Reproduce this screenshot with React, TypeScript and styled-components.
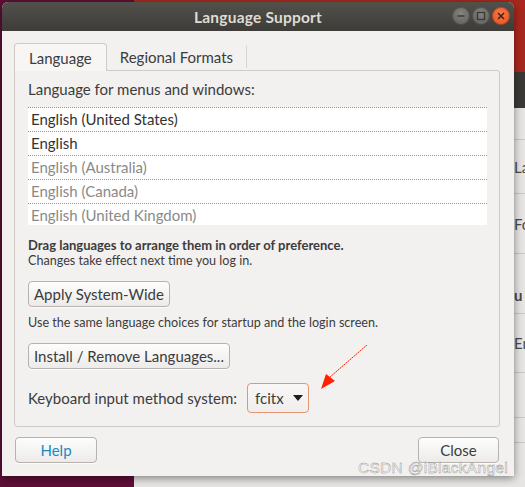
import styled, { createGlobalStyle } from "styled-components";

const GlobalStyle = createGlobalStyle`
  html, body {
    margin: 0;
    padding: 0;
    overflow: hidden;
  }
  body {
    font-family: "Lato", "Liberation Sans", sans-serif;
  }
`;

const Desktop = styled.div`
  position: relative;
  width: 525px;
  height: 487px;
  overflow: hidden;
  background: #5d0f35;
`;

// the window behind the dialog, on the right
const BackWindow = styled.div`
  position: absolute;
  left: 134px;
  top: 0;
  width: 391px;
  height: 487px;
  display: flex;
  flex-direction: column;
  background: #e6e5e3;
`;

const BackTop = styled.div`
  height: 72px;
  background: #a9281d;
`;

const BackHeader = styled.div`
  height: 36px;
  background: #3a3936;
`;

const BackList = styled.div`
  display: flex;
  flex-direction: column;
  padding-left: 240px;
`;

const BackRow = styled.div<{ $h: number; $bold?: boolean }>`
  height: ${({ $h }) => $h}px;
  box-sizing: border-box;
  border-bottom: 1px solid #c9c7c4;
  display: flex;
  align-items: center;
  padding-left: 140px;
  padding-top: ${({ $bold }) => ($bold ? "22px" : "0")};
  font-size: 15px;
  font-weight: ${({ $bold }) => ($bold ? 700 : 400)};
  color: #4a4a4a;
  white-space: nowrap;
`;

const Dialog = styled.div`
  position: absolute;
  left: 2px;
  top: 2px;
  width: 512px;
  height: 474px;
  display: flex;
  flex-direction: column;
  background: #f2f1f0;
  border-radius: 6px 6px 0 0;
  box-shadow: 0 2px 8px rgba(0, 0, 0, 0.45);
`;

const TitleBar = styled.div`
  position: relative;
  height: 29px;
  flex-shrink: 0;
  display: flex;
  align-items: center;
  justify-content: center;
  background: linear-gradient(#52504b, #3d3c38);
  border-radius: 6px 6px 0 0;
`;

const Title = styled.div`
  font-family: "Lato", "Liberation Sans", sans-serif;
  font-weight: 700;
  font-size: 15.5px;
  color: #dfdbd2;
  letter-spacing: 0.2px;
`;

const WindowButtons = styled.div`
  position: absolute;
  right: 4px;
  top: 5px;
  display: flex;
  gap: 2px;
`;

const WinButton = styled.div<{ $close?: boolean }>`
  width: 18px;
  height: 18px;
  border-radius: 50%;
  display: flex;
  align-items: center;
  justify-content: center;
  background: ${({ $close }) =>
    $close
      ? "radial-gradient(circle at 50% 35%, #f7774a, #e1501d)"
      : "radial-gradient(circle at 50% 35%, #85837e, #5c5a55)"};
  box-shadow: inset 0 0 0 1px rgba(0, 0, 0, 0.25);
`;

const Body = styled.div`
  position: relative;
  flex: 1;
  display: flex;
  flex-direction: column;
  padding: 12px 14px 0 12px;
`;

const Tabs = styled.div`
  display: flex;
  align-items: flex-end;
  height: 27px;
`;

const Tab = styled.div<{ $active?: boolean }>`
  box-sizing: border-box;
  display: flex;
  align-items: center;
  padding: 0 14px;
  font-size: 15px;
  color: #3c3c3c;
  ${({ $active }) =>
    $active
      ? `
    background: #f7f6f5;
    border: 1px solid #cfcac5;
    border-bottom: none;
    border-radius: 4px 4px 0 0;
    margin-bottom: -1px;
    position: relative;
    z-index: 1;
    height: 28px;
  `
      : `
    height: 22px;
    border-right: 1px solid #d8d4d0;
    margin-bottom: 2px;
    padding: 0 13px;
  `}
`;

const Panel = styled.div`
  height: 357px;
  box-sizing: border-box;
  border: 1px solid #cfcac5;
  border-radius: 0 3px 3px 3px;
  padding: 0 12px 0 13px;
  display: flex;
  flex-direction: column;
`;

const Heading = styled.div`
  height: 36px;
  display: flex;
  align-items: center;
  font-size: 15px;
  color: #3c3c3c;
`;

const LangList = styled.div`
  height: 118px;
  overflow: hidden;
  background: #ffffff;
  display: flex;
  flex-direction: column;
`;

const LangRow = styled.div<{ $dim?: boolean }>`
  height: 24px;
  flex-shrink: 0;
  box-sizing: border-box;
  border-top: 1px dotted #e4733f;
  display: flex;
  align-items: center;
  padding: 0 0 2px 3px;
  font-size: 15px;
  color: ${({ $dim }) => ($dim ? "#8a8a8a" : "#333333")};
`;

const Note = styled.div<{ $bold?: boolean }>`
  font-size: ${({ $bold }) => ($bold ? "13px" : "12.6px")};
  line-height: 15px;
  color: #3c3c3c;
  font-weight: ${({ $bold }) => ($bold ? 700 : 400)};
`;

const NoteBlock = styled.div`
  display: flex;
  flex-direction: column;
  padding-top: 13px;
`;

const Spacer = styled.div<{ $h: number }>`
  height: ${({ $h }) => $h}px;
  flex-shrink: 0;
`;

const Button = styled.div<{ $w?: number }>`
  box-sizing: border-box;
  height: 26px;
  ${({ $w }) => ($w ? `width: ${$w}px;` : "")}
  padding: 0 5px;
  display: inline-flex;
  align-items: center;
  justify-content: center;
  align-self: flex-start;
  border: 1px solid #b7b2ac;
  border-radius: 4px;
  background: linear-gradient(#fdfdfd, #ecebe9);
  box-shadow: 0 1px 0 rgba(255, 255, 255, 0.8);
  font-size: 15px;
  color: #3c3c3c;
`;

const HelpText = styled.span`
  color: #1a8ac6;
`;

const KeyboardRow = styled.div`
  display: flex;
  align-items: center;
  gap: 10px;
  margin-top: 14px;
`;

const Label = styled.div`
  font-size: 15px;
  color: #3c3c3c;
`;

const Combo = styled.div`
  box-sizing: border-box;
  width: 62px;
  height: 30px;
  display: flex;
  align-items: center;
  gap: 9px;
  padding-left: 7px;
  border: 1px solid #e49572;
  border-radius: 4px;
  background: linear-gradient(#f8f7f6, #efeeec);
  font-size: 15px;
  color: #3c3c3c;
`;

const Footer = styled.div`
  display: flex;
  justify-content: space-between;
  padding: 10px 1px 0 1px;
`;

const Arrow = styled.svg`
  position: absolute;
  left: 304px;
  top: 314px;
  pointer-events: none;
`;

const Watermark = styled.div`
  position: absolute;
  right: 17px;
  top: 459px;
  font-family: "Liberation Sans", sans-serif;
  font-size: 15.5px;
  color: rgba(250, 250, 250, 0.85);
  -webkit-text-stroke: 0.4px #8c8c8c;
  letter-spacing: 0.3px;
`;

const backRows = [
  { h: 32, t: "" },
  { h: 54, t: "La" },
  { h: 60, t: "Fo" },
  { h: 60, t: "u", bold: true },
  { h: 59, t: "En" },
  { h: 45, t: "" },
  { h: 25, t: "" },
];

const languages = [
  { name: "English (United States)", dim: false },
  { name: "English", dim: false },
  { name: "English (Australia)", dim: true },
  { name: "English (Canada)", dim: true },
  { name: "English (United Kingdom)", dim: true },
];

function App() {
  return (
    <Desktop>
      <GlobalStyle />
      <BackWindow>
        <BackTop />
        <BackHeader />
        <BackList>
          {backRows.map((r, i) => (
            <BackRow key={i} $h={r.h} $bold={r.bold}>
              {r.t}
            </BackRow>
          ))}
        </BackList>
      </BackWindow>
      <Dialog>
        <TitleBar>
          <Title>Language Support</Title>
          <WindowButtons>
            <WinButton>
              <svg width="10" height="10" viewBox="0 0 10 10">
                <line x1="1.5" y1="5" x2="8.5" y2="5" stroke="#3a3935" strokeWidth="1.4" />
              </svg>
            </WinButton>
            <WinButton>
              <svg width="10" height="10" viewBox="0 0 10 10">
                <rect x="1.5" y="1.5" width="7" height="7" fill="none" stroke="#3a3935" strokeWidth="1.3" />
              </svg>
            </WinButton>
            <WinButton $close>
              <svg width="10" height="10" viewBox="0 0 10 10">
                <path d="M2 2 L8 8 M8 2 L2 8" stroke="#4a1d0c" strokeWidth="1.5" />
              </svg>
            </WinButton>
          </WindowButtons>
        </TitleBar>
        <Body>
          <Tabs>
            <Tab $active>Language</Tab>
            <Tab>Regional Formats</Tab>
          </Tabs>
          <Panel>
            <Heading>Language for menus and windows:</Heading>
            <LangList>
              {languages.map((l) => (
                <LangRow key={l.name} $dim={l.dim}>
                  {l.name}
                </LangRow>
              ))}
            </LangList>
            <NoteBlock>
              <Note $bold>Drag languages to arrange them in order of preference.</Note>
              <Note>Changes take effect next time you log in.</Note>
            </NoteBlock>
            <Spacer $h={13} />
            <Button>Apply System-Wide</Button>
            <Spacer $h={8} />
            <Note>Use the same language choices for startup and the login screen.</Note>
            <Spacer $h={13} />
            <Button>Install / Remove Languages...</Button>
            <KeyboardRow>
              <Label>Keyboard input method system:</Label>
              <Combo>
                fcitx
                <svg width="10" height="6" viewBox="0 0 10 6">
                  <path d="M0 0 L10 0 L5 6 Z" fill="#1e1e1e" />
                </svg>
              </Combo>
            </KeyboardRow>
          </Panel>
          <Footer>
            <Button $w={82}>
              <HelpText>Help</HelpText>
            </Button>
            <Button $w={81}>Close</Button>
          </Footer>
          <Arrow width="70" height="50" viewBox="0 0 70 50">
            <line x1="61" y1="0" x2="24" y2="32" stroke="#ff2200" strokeWidth="1" strokeDasharray="2 0.6" />
            <path d="M15 44 L20 29 L29 36 Z" fill="#ff2200" />
          </Arrow>
        </Body>
      </Dialog>
      <Watermark>CSDN @iBlackAngel</Watermark>
    </Desktop>
  );
}

export default App;
